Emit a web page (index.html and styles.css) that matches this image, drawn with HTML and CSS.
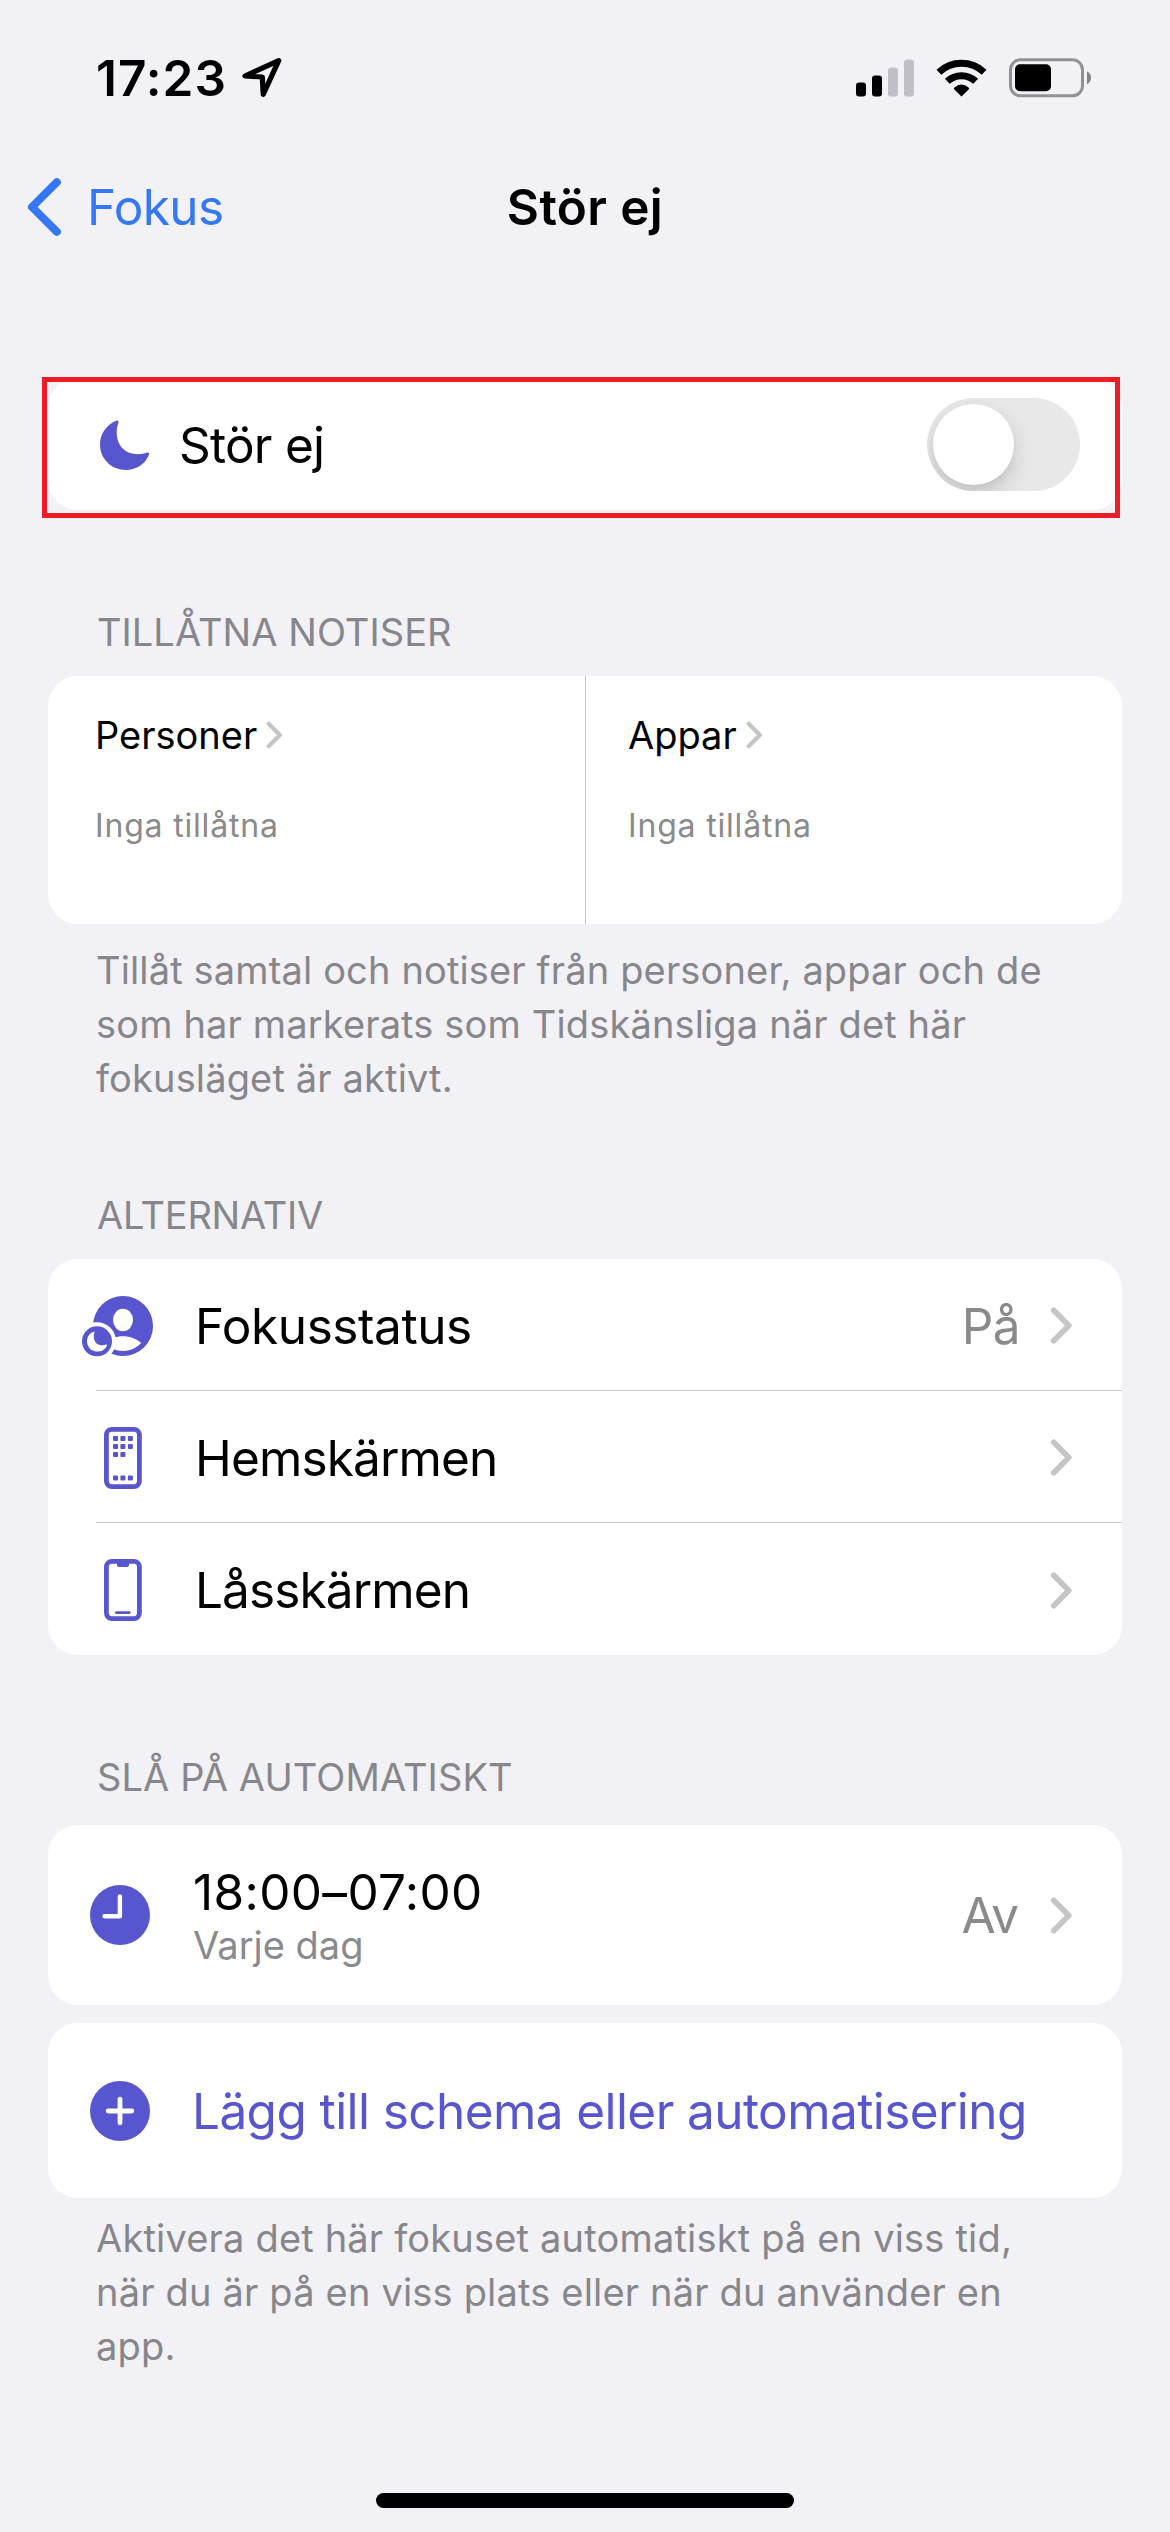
FILE: index.html
```html
<!DOCTYPE html>
<html lang="sv">
<head>
<meta charset="utf-8">
<title>Stör ej</title>
<link rel="stylesheet" href="styles.css">
</head>
<body>
<svg width="0" height="0" class="defs" aria-hidden="true">
  <symbol id="moon" viewBox="0 0 50 50"><path d="M17 .5C18.5 .1 18.9 1.2 18.3 3C17.2 6 16.7 9 16.7 12.5C16.7 25.5 25 34.2 38 34.2C41 34.2 44.5 33.6 47 32.6C48.8 32 49.6 33 48.9 34.8C45.5 44 36.5 50 26 50C11.5 50 0 38.8 0 24.5C0 13.5 7 4 17 .5Z" fill="currentColor"/></symbol>
  <symbol id="chevron" viewBox="0 0 23 37"><path d="M3.7 3.2L18.8 18.5L3.7 33.8" fill="none" stroke="currentColor" stroke-width="5.6" stroke-linecap="round" stroke-linejoin="round"/></symbol>
</svg>

<header class="statusbar">
  <div class="clock">
    <span class="time">17:23</span>
    <svg class="location" width="44" height="44" viewBox="0 0 44 44"><path d="M38.7 4.6L5 20L22.3 21L23.2 38.4Z" fill="none" stroke="#000" stroke-width="5.2" stroke-linejoin="round"/></svg>
  </div>
  <div class="indicators">
    <svg width="58" height="38" viewBox="0 0 58 38"><rect x="0" y="23.5" width="10" height="14" rx="3"/><rect x="16" y="16.5" width="10" height="21" rx="3"/><rect x="32" y="8.5" width="10" height="29" rx="3" fill="#c0bfc5"/><rect x="48" y=".5" width="10" height="37" rx="3" fill="#c0bfc5"/></svg>
    <svg width="51" height="38" viewBox="0 0 51 38"><g fill="none" stroke="#000" stroke-width="7"><path d="M2.9 13.2A33 33 0 0 1 48.1 13.2"/><path d="M11.3 22.3A20.7 20.7 0 0 1 39.7 22.3"/></g><path d="M18.4 28.4Q25.5 22.8 32.6 28.4Q33.6 29.4 32.6 30.4L25.5 37.6L18.4 30.4Q17.4 29.4 18.4 28.4Z"/></svg>
    <svg width="82" height="40" viewBox="0 0 82 40"><rect x="1.5" y="1.8" width="72" height="36" rx="10" fill="none" stroke="#919195" stroke-width="3"/><rect x="6" y="6.3" width="36" height="27" rx="5"/><path d="M78 13.3Q82 15.5 82 19.8T78 26.3Z" fill="#828286"/></svg>
  </div>
</header>

<nav class="navbar">
  <a class="back"><svg width="38" height="60" viewBox="0 0 38 60"><path d="M30.9 5.2L6 30L30.9 54.8" fill="none" stroke="currentColor" stroke-width="8" stroke-linecap="round" stroke-linejoin="round"/></svg><span class="back-label">Fokus</span></a>
  <h1 class="title">Stör ej</h1>
</nav>

<main class="content">
  <section class="card toggle-card">
    <svg class="accent" width="50" height="50"><use href="#moon"/></svg>
    <span class="toggle-label">Stör ej</span>
    <span class="switch"><span class="thumb"></span></span>
    <span class="highlight"></span>
  </section>

  <section class="group">
    <h2 class="heading">TILLÅTNA NOTISER</h2>
    <div class="card allowed">
      <div class="allowed-cell">
        <div class="allowed-title">Personer<svg class="chevron" width="17" height="28"><use href="#chevron"/></svg></div>
        <div class="allowed-note">Inga tillåtna</div>
      </div>
      <div class="allowed-cell">
        <div class="allowed-title">Appar<svg class="chevron" width="17" height="28"><use href="#chevron"/></svg></div>
        <div class="allowed-note">Inga tillåtna</div>
      </div>
    </div>
    <p class="footnote">Tillåt samtal och notiser från personer, appar och de<br>som har markerats som Tidskänsliga när det här<br>fokusläget är aktivt.</p>
  </section>

  <section class="group options">
    <h2 class="heading tight">ALTERNATIV</h2>
    <div class="card">
      <div class="row">
        <svg class="accent" width="82" height="62" viewBox="0 0 82 62"><circle cx="41" cy="31" r="30" fill="currentColor"/><ellipse cx="41" cy="25" rx="10" ry="11.2" fill="#fff"/><path d="M59.3 48C54 43.7 48 41.3 41 41.3S28 43.7 22.7 48A25 25 0 0 0 59.3 48Z" fill="#fff"/><circle cx="15" cy="46.3" r="19" fill="#fff"/><circle cx="15" cy="46.3" r="15" fill="currentColor"/><g color="#fff"><use href="#moon" x="5" y="36.3" width="20.4" height="20.4"/></g></svg>
        <span class="label fokusstatus">Fokusstatus</span>
        <span class="value">På</span>
        <svg class="chevron" width="23" height="37"><use href="#chevron"/></svg>
      </div>
      <div class="separator"></div>
      <div class="row">
        <svg class="accent" width="82" height="62" viewBox="-22 0 82 62"><rect x="2.4" y="2.4" width="33" height="57.2" rx="5.5" fill="none" stroke="currentColor" stroke-width="4.8"/><g fill="currentColor"><rect x="9" y="9" width="5" height="5" rx="1"/><rect x="16.4" y="9" width="5" height="5" rx="1"/><rect x="23.9" y="9" width="5" height="5" rx="1"/><rect x="9" y="17" width="5" height="5" rx="1"/><rect x="16.4" y="17" width="5" height="5" rx="1"/><rect x="23.9" y="17" width="5" height="5" rx="1"/><rect x="9" y="25" width="5" height="5" rx="1"/><rect x="16.4" y="25" width="5" height="5" rx="1"/><rect x="9" y="48.4" width="5" height="5" rx="1"/><rect x="16.4" y="48.4" width="5" height="5" rx="1"/><rect x="23.9" y="48.4" width="5" height="5" rx="1"/></g></svg>
        <span class="label narrow">Hemskärmen</span>
        <svg class="chevron" width="23" height="37"><use href="#chevron"/></svg>
      </div>
      <div class="separator"></div>
      <div class="row">
        <svg class="accent" width="82" height="62" viewBox="-22 0 82 62"><rect x="2.4" y="2.4" width="33" height="57.2" rx="5.5" fill="none" stroke="currentColor" stroke-width="4.8"/><path d="M13 4H25V6.2Q24.6 8 22.8 8H15.2Q13.4 8 13 6.2Z" fill="currentColor"/><rect x="11" y="52.2" width="15.7" height="2.8" rx="1.4" fill="currentColor"/></svg>
        <span class="label narrow">Låsskärmen</span>
        <svg class="chevron" width="23" height="37"><use href="#chevron"/></svg>
      </div>
    </div>
  </section>

  <section class="group">
    <h2 class="heading loose">SLÅ PÅ AUTOMATISKT</h2>
    <div class="card schedule">
      <svg class="accent" width="60" height="60" viewBox="0 0 60 60"><circle cx="30" cy="30" r="30" fill="currentColor"/><path d="M29.9 11.5V31.2H14.6" fill="none" stroke="#fff" stroke-width="4.4" stroke-linecap="round" stroke-linejoin="round"/></svg>
      <div class="schedule-text">
        <div class="schedule-time">18:00–07:00</div>
        <div class="schedule-days">Varje dag</div>
      </div>
      <span class="value off">Av</span>
      <svg class="chevron" width="23" height="37"><use href="#chevron"/></svg>
    </div>
    <div class="card add">
      <svg class="accent" width="60" height="60" viewBox="0 0 60 60"><circle cx="30" cy="30" r="30" fill="currentColor"/><path d="M30 18.2V41.8M18.2 30H41.8" stroke="#fff" stroke-width="4.8" stroke-linecap="round"/></svg>
      <span class="add-label">Lägg till schema eller automatisering</span>
    </div>
    <p class="footnote close">Aktivera det här fokuset automatiskt på en viss tid,<br>när du är på en viss plats eller när du använder en<br>app.</p>
  </section>
</main>
<div class="home-indicator"></div>
</body>
</html>
```
FILE: styles.css
```css
* { box-sizing: border-box; }
body {
  margin: 0;
  width: 1170px;
  height: 2532px;
  overflow: hidden;
  background: #f2f1f6;
  color: #000;
  font-family: Inter, "Liberation Sans", sans-serif;
  font-size: 49.5px;
  line-height: 60px;
}
svg { display: block; flex: none; }
.defs { position: absolute; }
h1, h2, p { margin: 0; font-weight: 400; }

.statusbar {
  height: 156px;
  padding: 0 79px 0 96px;
  display: flex;
  align-items: center;
  justify-content: space-between;
}
.clock { display: flex; align-items: center; gap: 13px; }
.time { font-weight: 600; letter-spacing: 1px; }
.indicators { display: flex; align-items: center; gap: 22px; }

.navbar {
  height: 102px;
  padding: 0 26px;
  display: grid;
  grid-template-columns: 1fr auto 1fr;
  align-items: center;
}
.back { display: flex; align-items: center; gap: 23px; color: #3478f6; }
.back-label { letter-spacing: -0.6px; }
.title { font-size: 49.5px; font-weight: 600; letter-spacing: 0.38px; }

.content { padding: 120px 48px 0; }
.card { background: #fff; border-radius: 30px; }
.accent { color: #5856ce; }
.chevron { color: #c5c5c7; }

.toggle-card {
  position: relative;
  height: 132px;
  padding: 1px 42px 0 52px;
  display: flex;
  align-items: center;
}
.toggle-label { margin-left: 29px; flex: 1; letter-spacing: -0.76px; }
.switch {
  width: 153px;
  height: 93px;
  padding: 6px;
  border-radius: 47px;
  background: #e8e8e9;
  overflow: hidden;
}
.thumb {
  display: block;
  width: 81px;
  height: 81px;
  border-radius: 50%;
  background: #fff;
  box-shadow: 0 9px 24px rgba(0, 0, 0, 0.15), 0 6px 6px rgba(0, 0, 0, 0.04);
}
.highlight {
  position: absolute;
  left: -6px;
  top: -1px;
  width: 1078px;
  height: 141px;
  border: 5px solid #ee1c25;
}

.group { margin-top: 95px; }
.options { margin-top: 83px; }
.heading {
  padding-left: 49px;
  margin-bottom: 17px;
  font-size: 38px;
  line-height: 54px;
  letter-spacing: 0.05px;
  color: #86868b;
}
.tight { letter-spacing: -0.25px; }
.loose { margin-bottom: 21px; letter-spacing: 0.1px; }
.footnote {
  margin-top: 19px;
  padding-left: 48px;
  font-size: 38px;
  line-height: 54px;
  letter-spacing: 0.145px;
  color: #86868b;
}
.close { margin-top: 13px; letter-spacing: 0.18px; }

.allowed { height: 248px; display: flex; }
.allowed-cell { padding: 32px 0 0 47px; }
.allowed-cell:first-child { width: 538px; border-right: 1px solid #c6c6c8; }
.allowed-cell + .allowed-cell { padding-left: 42px; }
.allowed-title {
  display: flex;
  align-items: center;
  gap: 9px;
  font-size: 38px;
  line-height: 54px;
}
.allowed-note {
  margin-top: 42px;
  font-size: 32px;
  line-height: 44px;
  letter-spacing: 0.82px;
  color: #8a8a8d;
}

.row {
  height: 131px;
  padding: 2px 49px 0 34px;
  display: flex;
  align-items: center;
}
.row:last-child { height: 132px; }
.separator { height: 1px; margin-left: 48px; background: #c6c6c8; }
.label { margin-left: 31px; flex: 1; }
.fokusstatus { letter-spacing: -0.43px; }
.narrow { letter-spacing: -0.87px; }
.value { margin-right: 30px; color: #8a8a8d; letter-spacing: -0.6px; }
.off { letter-spacing: -1px; margin-right: 32px; }

.schedule {
  height: 180px;
  padding: 0 49px 0 42px;
  display: flex;
  align-items: center;
}
.schedule-text { margin-left: 43px; flex: 1; }
.schedule-time { letter-spacing: 0.37px; }
.schedule-days { font-size: 38px; line-height: 46px; color: #8a8a8d; }
.add {
  height: 175px;
  margin-top: 18px;
  padding-left: 42px;
  display: flex;
  align-items: center;
}
.add-label { margin-left: 42px; color: #5856ce; letter-spacing: -0.58px; }

.home-indicator {
  width: 418px;
  height: 15px;
  margin: 120px auto 0;
  border-radius: 8px;
  background: #000;
}
```
